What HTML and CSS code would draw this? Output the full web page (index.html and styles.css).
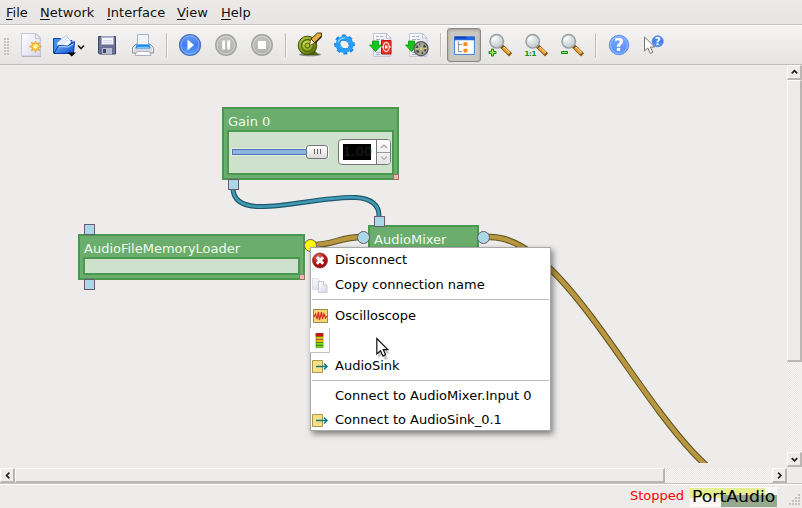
FILE: index.html
```html
<!DOCTYPE html>
<html lang="en">
<head>
<meta charset="utf-8">
<title>Network editor</title>
<link rel="stylesheet" href="styles.css">
</head>
<body>
<svg class="defs" width="0" height="0">
  <defs>
    <linearGradient id="blue" x1="0" y1="0" x2="0" y2="1"><stop offset="0" stop-color="#6f9df2"/><stop offset=".5" stop-color="#3f7df0"/><stop offset="1" stop-color="#5fa0ff"/></linearGradient>
    <linearGradient id="help-blue" x1="0" y1="0" x2="0" y2="1"><stop offset="0" stop-color="#79a6fb"/><stop offset="1" stop-color="#5890f8"/></linearGradient>
    <linearGradient id="grey" x1="0" y1="0" x2="0" y2="1"><stop offset="0" stop-color="#c4c4c2"/><stop offset="1" stop-color="#b0b0ad"/></linearGradient>
    <linearGradient id="paper" x1="0" y1="0" x2="1" y2="1"><stop offset="0" stop-color="#ffffff"/><stop offset="1" stop-color="#d5d7ea"/></linearGradient>
    <linearGradient id="folder" x1="0" y1="0" x2="1" y2="1"><stop offset="0" stop-color="#7fc4ff"/><stop offset="1" stop-color="#0a49c9"/></linearGradient>
    <radialGradient id="lens" cx=".4" cy=".35" r=".7"><stop offset="0" stop-color="#f2f6f7"/><stop offset="1" stop-color="#b9c6ca"/></radialGradient>
    <radialGradient id="snail" cx=".4" cy=".35" r=".7"><stop offset="0" stop-color="#d2df55"/><stop offset=".7" stop-color="#7f9b18"/><stop offset="1" stop-color="#3f5206"/></radialGradient>
    <radialGradient id="red" cx=".4" cy=".3" r=".8"><stop offset="0" stop-color="#e58080"/><stop offset=".5" stop-color="#b81414"/><stop offset="1" stop-color="#8a0808"/></radialGradient>
    <g id="magnifier">
      <path d="M21 20.500L27 26.300" stroke="#8a5418" stroke-width="4.400" stroke-linecap="square"/>
      <path d="M21 20.500L27.300 26.600" stroke="#f0a233" stroke-width="2.800"/>
      <path d="M22 20L28 25.500" stroke="#ffdf9b" stroke-width="1"/>
      <circle cx="14.700" cy="14.300" r="6.800" fill="url(#lens)" stroke="#9a9fa1" stroke-width="1.400"/>
      <path d="M10.500 14.300a4.300 4.300 0 0 1 4.300-4.300" fill="none" stroke="#fff" stroke-width="1.300"/>
    </g>
    <g id="page">
      <path d="M10.500 6.500h13l4.500 4.500v18.500h-17.500z" fill="url(#paper)" stroke="#c3c6d6"/>
      <path d="M13 9.500h3m1 0h3M13 12.500h4m1 0h3M13 25.500h5M13 27.500h4" stroke="#aab0ca"/>
      <path d="M23.500 6.500v4.500h4.500z" fill="#f7f8ff" stroke="#b4b8cc" stroke-width=".8"/>
    </g>
    <path id="down-arrow" d="M9.500 14h6v4h3L12.500 24.500 6.500 18h3z" fill="#15c51b" stroke="#0a980f" stroke-width=".8"/>
    <g id="sink">
      <path d="M1.500 3.500h10v12h-10z" fill="#f5e084" stroke="#a8974c"/>
      <path d="M5 9.500h11M13 6.500l3 3-3 3" fill="none" stroke="#0b7c80" stroke-width="1.500"/>
    </g>
  </defs>
</svg>

<div class="window">
  <nav class="menubar">
    <span class="file"><u>F</u>ile</span><span class="network"><u>N</u>etwork</span><span class="interface"><u>I</u>nterface</span><span class="view"><u>V</u>iew</span><span class="help"><u>H</u>elp</span>
  </nav>

  <div class="toolbar">
    <span class="grip"></span>
    <svg class="tool" viewBox="0 0 36 36">
      <path d="M8.500 6.500h14.500l4.500 4.500v18h-19z" fill="url(#paper)" stroke="#c4c6d8"/>
      <path d="M22.500 6.500v5h5z" fill="#eef0fb" stroke="#b9bcd0" stroke-width=".8"/>
      <path d="M9 29.500h19" stroke="#b0b2bf"/>
      <path d="M22.500 14l1.200 2.800 2.800-1.200-1.200 2.700 3 1.200-3 1.200 1.200 2.800-2.800-1.200-1.200 2.900-1.200-2.900-2.800 1.200 1.200-2.800-3-1.200 3-1.200-1.200-2.700 2.800 1.200z" fill="#ffd95a" stroke="#eb9a18" stroke-width=".9"/>
      <circle cx="22.500" cy="19.500" r="1.800" fill="#fff7c0"/>
    </svg>
    <svg class="tool wide" viewBox="0 0 40 36">
      <path d="M4.500 26V11.500h7l1.500 2h10V26z" fill="#438fe9" stroke="#1244b5"/>
      <path d="M8 16l9-7.500 5 6-3 6-9 2z" fill="#f7fbff" stroke="#9db7de" stroke-width=".8"/>
      <path d="M10 17.500L18 11M11 19l8-6" stroke="#b8cbed" stroke-width=".8"/>
      <path d="M5 26.500l4.500-8 9 .5 7-4.500-1 12z" fill="url(#folder)" stroke="#0a39b0"/>
      <path d="M10 19.500l9 .5 5.500-3" fill="none" stroke="#b4dcff"/>
      <path d="M18.500 25.500h8.500L22.700 29.500z" fill="#000"/>
      <path d="M29 18.500l3 3 3-3" fill="none" stroke="#222" stroke-width="1.700"/>
    </svg>
    <svg class="tool" viewBox="0 0 36 36">
      <path d="M9.500 9.500h17v17.500h-16l-1-1z" fill="#6c7196" stroke="#3e4468"/>
      <path d="M12.500 9.500h12v8h-12z" fill="#f5f6fb" stroke="#a6a9be" stroke-width=".7"/>
      <path d="M12.500 10.500h12" stroke="#aeb3cc"/><path d="M14 13.500h9M14 15.500h9" stroke="#d5d8e8"/>
      <path d="M13 21h10v6H13z" fill="#b8bbcd"/><path d="M14 22h3v4h-3z" fill="#3e4468"/>
    </svg>
    <svg class="tool" viewBox="0 0 36 36">
      <path d="M11 17l-3.500 3.500v5.500h3l1.500 2.500h12l1.500-2.500h3v-5.500L25 17z" fill="#d8d9e1" stroke="#8d909f"/>
      <path d="M12.500 18V7.500h11V18z" fill="#eef3fc" stroke="#a9b3c9"/>
      <path d="M11.500 17.500h13l1 4h-15z" fill="#2588e8"/><path d="M12 20.500h12" stroke="#75c8ff" stroke-width="1.500"/>
      <path d="M12 24.500h12l2 4H10z" fill="#fbfbfd" stroke="#a4a6b1" stroke-width=".8"/>
      <path d="M8.500 21.500v3M27.500 21.500v3" stroke="#fff"/>
    </svg>
    <i class="separator"></i>
    <svg class="tool" viewBox="0 0 36 36"><circle cx="18" cy="18" r="10.500" fill="url(#blue)" stroke="#4b71b6" stroke-width="1.200"/><circle cx="18" cy="18" r="9" fill="none" stroke="#8db4ff" stroke-width=".8"/><path d="M15.500 12.500v11L22 18z" fill="#fff"/></svg>
    <svg class="tool" viewBox="0 0 36 36"><circle cx="18" cy="18" r="10.200" fill="url(#grey)" stroke="#a3a3a1" stroke-width="1.500"/><circle cx="18" cy="18" r="8.900" fill="none" stroke="#d2d2d0"/><path d="M14.200 13.500h2.900v9h-2.900zM19.200 13.500h2.900v9h-2.900z" fill="#fff"/></svg>
    <svg class="tool" viewBox="0 0 36 36"><circle cx="18" cy="18" r="10.200" fill="url(#grey)" stroke="#a3a3a1" stroke-width="1.500"/><circle cx="18" cy="18" r="8.900" fill="none" stroke="#d2d2d0"/><path d="M14 14h8v8h-8z" fill="#fff"/></svg>
    <i class="separator"></i>
    <svg class="tool" viewBox="0 0 36 36">
      <ellipse cx="19" cy="27.500" rx="11" ry="1.800" fill="#555" opacity=".65"/>
      <path d="M15 28h13l-5-5z" fill="#52650c"/>
      <circle cx="16.500" cy="18.500" r="9.300" fill="url(#snail)" stroke="#405006"/>
      <circle cx="16.500" cy="18.500" r="6" fill="none" stroke="#52680c" stroke-width="1.400"/>
      <circle cx="16.500" cy="18.500" r="2.500" fill="#a9c036" stroke="#506409"/>
      <path d="M18.500 18.500l1.500-7 4.500 4z" fill="#fff3d4" stroke="#403010" stroke-width=".6"/>
      <path d="M20 12l6.500-6h4v3.500l-6.500 6.500z" fill="#e0af3c" stroke="#3c2908" stroke-width=".9"/>
      <path d="M24 16l6.500-6.500" stroke="#211704" stroke-width="1.500"/>
    </svg>
    <svg class="tool" viewBox="0 0 36 36">
      <ellipse cx="17.500" cy="17.500" rx="8.800" ry="8" fill="none" stroke="#1684e9" stroke-width="3.500" stroke-dasharray="3.600 3" transform="rotate(28 17.500 17.500)"/>
      <ellipse cx="17.500" cy="17.500" rx="6.900" ry="6.200" fill="none" stroke="#26a0fb" stroke-width="4.400"/>
      <path d="M11 15.500a7 6.500 0 0 1 7-4.500" fill="none" stroke="#79caff" stroke-width="1.500"/>
      <ellipse cx="17.500" cy="17.500" rx="5" ry="4" fill="#f0f1f3" stroke="#167cdc" stroke-width=".9" transform="rotate(35 17.500 17.500)"/>
    </svg>
    <svg class="tool" viewBox="0 0 36 36"><use href="#page"/><path d="M18.500 13.500h9.500v13.500h-9.500z" fill="#e93127" stroke="#b91713"/><ellipse cx="23.300" cy="20" rx="3" ry="4.500" fill="none" stroke="#ffd5d0" stroke-width="1.300"/><path d="M22 18.500h2.500v3H22z" fill="#fff"/><path d="M18.500 20h2m5.500 0h2" stroke="#fff"/><use href="#down-arrow"/></svg>
    <svg class="tool" viewBox="0 0 36 36"><use href="#page"/><use href="#down-arrow"/><circle cx="22" cy="21.700" r="7" fill="#a5a69a" stroke="#5b5c58" stroke-width="1.300"/><circle cx="22" cy="21.700" r="4.300" fill="none" stroke="#4b4c48" stroke-width="2.300" stroke-dasharray="2.500 2"/><circle cx="22" cy="21.700" r="1.500" fill="#e0cc54"/><path d="M22 16v3M22 24.500v3M16.500 21.700h3M24.500 21.700h3" stroke="#d4d0a0"/></svg>
    <i class="separator"></i>
    <svg class="tool pressed" viewBox="0 0 34 34">
      <path d="M7 8.500h21v18.500H7z" fill="#fdfeff" stroke="#3475da"/><path d="M6.500 8h22v4h-22z" fill="#2268de"/><path d="M7.500 9h12" stroke="#0838b4" stroke-width="1.500"/>
      <path d="M11 13v11.500M11 16.500h4M11 24h4" stroke="#888" fill="none"/><path d="M16.500 14h4v4h-4zM16.500 21h4v4h-4z" fill="#fb8b14"/>
    </svg>
    <svg class="tool" viewBox="0 0 36 36"><use href="#magnifier"/><path d="M9.500 22h2v2.500h2.500v2h-2.500v2.500h-2v-2.500H7v-2h2.500z" fill="#a4ed6b" stroke="#168b0c"/></svg>
    <svg class="tool" viewBox="0 0 36 36"><use href="#magnifier"/><text class="ratio" x="6.500" y="29">1:1</text></svg>
    <svg class="tool" viewBox="0 0 36 36"><use href="#magnifier"/><path d="M7.500 24.500h6v2h-6z" fill="#a4ed6b" stroke="#168b0c"/></svg>
    <i class="separator"></i>
    <svg class="tool" viewBox="0 0 36 36"><circle cx="18" cy="18" r="9.700" fill="url(#help-blue)" stroke="#5c8cf0"/><circle cx="18" cy="18" r="8.500" fill="none" stroke="#a6c4ff" stroke-width=".8"/><text class="question" x="18" y="24">?</text></svg>
    <svg class="tool" viewBox="0 0 36 36"><path d="M7.500 10v14l3.300-3 2.500 5.500 2.500-1.200-2.400-5.300h4.300z" fill="#fff" stroke="#777"/><circle cx="20.700" cy="14.300" r="5.500" fill="url(#blue)" stroke="#386fe0" stroke-width=".7"/><text class="question small" x="20.700" y="18">?</text></svg>
  </div>

  <main class="workspace">
    <section class="canvas">
      <svg class="wires" viewBox="0 65 787 398">
        <g fill="none">
          <path d="M233 188C233 238 379 166 379 216" stroke="#23566a" stroke-width="5"/><path d="M233 188C233 238 379 166 379 216" stroke="#3f9bb5" stroke-width="2.600"/>
          <path d="M310 245C337 245 337 237 363 237M484 237H490C582 237 670 493 762 493" stroke="#62531f" stroke-width="6.400"/>
          <path d="M310 245C337 245 337 237 363 237M484 237H490C582 237 670 493 762 493" stroke="#b99740" stroke-width="4.400"/>
        </g>
      </svg>
      <article class="node gain">
        <h2>Gain 0</h2>
        <div class="node-body">
          <div class="slider"><i class="rail"></i><b class="knob"><i></i><i></i><i></i></b></div>
          <div class="spin"><span class="value"><span>1.00</span></span><span class="steps"><svg viewBox="0 0 14 12"><path d="M4 8l3-3 3 3"/></svg><svg viewBox="0 0 14 12"><path d="M4 4l3 3 3-3"/></svg></span></div>
        </div>
        <i class="resize"></i><i class="port bottom"></i>
      </article>
      <article class="node loader">
        <h2>AudioFileMemoryLoader</h2><div class="node-body"></div>
        <i class="resize"></i><i class="port top"></i><i class="port bottom"></i><i class="port round right yellow"></i>
      </article>
      <article class="node mixer">
        <h2>AudioMixer</h2>
        <i class="port top"></i><i class="port round left"></i><i class="port round right"></i>
      </article>
      <div class="context-menu">
        <div class="item first"><svg viewBox="0 0 18 18"><circle cx="9" cy="9.500" r="7.500" fill="url(#red)" stroke="#9a3434" stroke-width=".8"/><path d="M5.800 6.300l6.400 6.400M12.200 6.300l-6.400 6.400" stroke="#fff" stroke-width="3"/></svg><span>Disconnect</span></div>
        <div class="item"><svg viewBox="0 0 18 18"><path d="M1.500 2.500h5l3 3v8h-8z" fill="url(#paper)" stroke="#dcdce2"/><path d="M7.500 5.500h5l3.500 3.500v7.500H7.500z" fill="url(#paper)" stroke="#cbccd5"/><path d="M12.500 5.500V9H16" fill="#fff" stroke="#c5c5d0"/></svg><span>Copy connection name</span></div>
        <hr>
        <div class="item"><svg viewBox="0 0 18 18"><path d="M2.500 2.500h14v13h-14z" fill="#f3d878" stroke="#a38b45"/><path d="M3 10l1.500-3 1.500 5 1.500-7 1 8 2-8 1 7 1.500-5 1.500 4 1.500-2" fill="none" stroke="#d92c20" stroke-width="1.200"/></svg><span>Oscilloscope</span></div>
        <div class="item meter"><svg viewBox="0 0 18 18"><path d="M5 1h8v16H5z" fill="#525238"/><path d="M5 1.500h8V4H5z" fill="#e40909"/><path d="M5.500 5H13v2.300H5.500zM5.500 8.300H13v2.200H5.500z" fill="#f0b80a"/><path d="M5.500 11.300H13v2.300H5.500zM5.500 14.500H13v2.300H5.500z" fill="#6bea00"/></svg></div>
        <div class="item"><svg viewBox="0 0 18 18"><use href="#sink"/></svg><span>AudioSink</span></div>
        <hr class="second">
        <div class="item connect"><i class="blank"></i><span>Connect to AudioMixer.Input 0</span></div>
        <div class="item last"><svg viewBox="0 0 18 18"><use href="#sink"/></svg><span>Connect to AudioSink_0.1</span></div>
      </div>
      <svg class="cursor" viewBox="0 0 15 23"><path d="M2 4v17l4-3.500L9 23l3-1-2.500-5.500H14z" fill="#777" opacity=".4"/><path d="M.8 1.500v15.500l3.700-3.300 2.400 5.300 2.700-1.200-2.300-5.100h4.500z" fill="#fff" stroke="#111" stroke-width="1.200"/></svg>
    </section>
    <div class="scroll vertical"><span class="button"><svg viewBox="0 0 14 14"><path d="M4 8l3-3 3 3"/></svg></span><i class="thumb"></i><span class="track"></span><span class="button"><svg viewBox="0 0 14 14"><path d="M4 5.500l3 3 3-3"/></svg></span></div>
  </main>
  <div class="scroll horizontal"><span class="button"><svg viewBox="0 0 14 14"><path d="M9 4L6 7l3 3"/></svg></span><i class="thumb"></i><span class="track"></span><span class="button"><svg viewBox="0 0 14 14"><path d="M5.500 4l3 3-3 3"/></svg></span></div>
  <footer class="statusbar"><span class="state">Stopped</span><span class="backend"><span>PortAudio</span></span><svg class="size-grip" viewBox="0 0 12 12"><path d="M10 1h2M7 4h2M10 4h2M4 7h2M7 7h2M10 7h2M1 10h2M4 10h2M7 10h2M10 10h2" stroke="#b5b4b2" stroke-width="1.500"/></svg></footer>
</div>
</body>
</html>
```
FILE: styles.css
```css
* { box-sizing: border-box; }
body { margin: 0; font: 13px/16px "DejaVu Sans", sans-serif; color: #111; background: #edecea; overflow: hidden; }
.defs { position: absolute; }
.window { width: 802px; height: 508px; display: flex; flex-direction: column; }

.menubar { height: 25px; padding: 5px 0 0 6px; display: flex; background: linear-gradient(#ebeae9, #e6e5e3); border-bottom: 1px solid #c2c1bf; }
.menubar u { text-underline-offset: 2px; text-decoration-thickness: 1px; }
.menubar .file { width: 34px; }
.menubar .network { width: 67px; }
.menubar .interface { width: 70px; }
.menubar .view { width: 44px; }

.toolbar { height: 40px; padding-top: 1px; display: flex; background: linear-gradient(#f5f4f3, #e5e4e2); border-top: 1px solid #fff; border-bottom: 1px solid #bebdbb; }
.grip { width: 5px; height: 17px; margin: 11px 4px 0; background: radial-gradient(circle at 1px 1px, #c4c3c1 .7px, transparent 1px) 0 0 / 3px 3px; }
.tool { width: 36px; height: 36px; flex: none; }
.tool.wide { width: 40px; }
.separator { width: 1px; height: 24px; margin: 6px 5px 0; flex: none; background: #bcbbb9; box-shadow: 1px 0 #fafafa; }
.tool.pressed { width: 34px; height: 34px; margin: 1px; border: 1px solid #8a8784; border-radius: 3px; background: #cbc7c3; box-shadow: inset 0 1px 3px #9d9995; }
.ratio { font: bold 7px "DejaVu Sans", sans-serif; fill: #138c0a; letter-spacing: -.3px; }
.question { font: bold 17px "DejaVu Sans", sans-serif; fill: #fff; text-anchor: middle; }
.question.small { font-size: 10px; }

.workspace { height: 402px; display: flex; }
.canvas { position: relative; width: 787px; height: 402px; overflow: hidden; }
.wires { display: block; width: 787px; height: 398px; }
.node { position: absolute; background: #6aad6c; border: 2px solid #4a984d; }
.node h2 { margin: 0; font: 13px/16px "DejaVu Sans", sans-serif; color: #f0faef; }
.gain { left: 222px; top: 42px; width: 177px; height: 73px; padding: 5px 3px 3px 3px; }
.loader { left: 78px; top: 169px; width: 227px; height: 46px; padding: 5px 3px 3px 3px; }
.mixer { left: 368px; top: 160px; width: 111px; height: 60px; padding: 5px 4px; }
.gain h2, .loader h2 { padding-left: 1px; }
.node-body { border: 2px solid #4a984d; background: #cde1cd; }
.gain .node-body { display: flex; width: 167px; height: 45px; padding: 6px 0 0 3px; }
.loader .node-body { width: 217px; height: 18px; }
.slider { display: flex; align-items: center; width: 97px; height: 27px; }
.rail { width: 75px; height: 6px; margin-right: -1px; background: #8eb1df; border: 1px solid #5078b4; box-shadow: 0 0 0 1px #e1ece2; }
.knob { width: 22px; height: 14px; display: flex; justify-content: center; align-items: center; gap: 2px; background: linear-gradient(#fff, #dcdcdc); border: 1px solid #777; border-radius: 3px; box-shadow: 1px 0 #f5f5f5; }
.knob i { width: 1px; height: 5px; background: #666; }
.spin { display: flex; width: 53px; height: 26px; margin: 1px 0 0 9px; overflow: hidden; background: #fff; border: 1px solid #777; border-radius: 4px; }
.value { width: 38px; padding: 4px 0 0 4px; }
.value span { display: block; width: 28px; height: 16px; background: #000; color: #202020; line-height: 16px; }
.steps { width: 14px; display: flex; flex-direction: column; background: linear-gradient(#fff, #e5e5e5); border-left: 1px solid #777; }
.steps svg { width: 14px; height: 12px; fill: none; stroke: #a3a3a3; stroke-width: 1.2; }
.steps svg + svg { border-top: 1px solid #999; }
.resize { position: absolute; right: -2px; bottom: -2px; width: 6px; height: 6px; background: #f6b4ae; border: 1px solid #9a7464; }
.port { position: absolute; width: 11px; height: 11px; background: #abd8e6; border: 1px solid #6a5a70; }
.port.top { left: 3.5px; top: -12px; }
.port.bottom { left: 3.5px; bottom: -12px; }
.mixer .port.top { left: 3.5px; top: -11px; }
.port.round { width: 13px; height: 13px; border-radius: 50%; }
.port.left { left: -13px; top: 4px; }
.port.right { right: -13px; top: 4px; }
.port.yellow { background: #ff0; top: 3px; right: -14px; }

.context-menu { position: absolute; left: 310px; top: 182px; width: 241px; height: 184px; background: #fff; border: 1px solid #a9a8a8; box-shadow: 2px 3px 6px rgba(0,0,0,.48); color: #000; }
.item { height: 25px; display: flex; align-items: center; }
.item svg, .blank { width: 18px; height: 18px; margin-right: 6px; }
.item.first { height: 24px; }
.item.connect { height: 24px; padding-top: 2px; }
.item.last { height: 23px; padding-top: 2px; }
.context-menu hr { height: 1px; margin: 2px 1px 3px; border: 0; background: #bcbbbb; }
.context-menu hr.second { margin: 2px 1px 2px; }
.meter { width: 20px; margin-left: -1px; padding-left: 1px; background: #fff; border: solid #c2c2c2; border-width: 0 1px 1px 0; }
.item.meter svg { width: 17px; height: 17px; margin: 0; }
.cursor { position: absolute; left: 376px; top: 272px; width: 15px; height: 23px; }

.scroll { display: flex; background: #edecea; }
.vertical { width: 15px; height: 402px; flex-direction: column; }
.horizontal { width: 787px; height: 16px; padding-top: 1px; }
.button, .thumb { flex: none; background: #edecea; border: 1px solid #fff; border-right: 2px solid #b8b7b5; border-bottom: 2px solid #b8b7b5; }
.button { width: 15px; height: 15px; }
.button svg { display: block; width: 13px; height: 13px; fill: none; stroke: #222; stroke-width: 1.8; }
.vertical .thumb { width: 15px; height: 282px; }
.horizontal .thumb { width: 650px; height: 15px; }
.track { flex: 1; background: repeating-conic-gradient(#f8f8f8 0 25%, #e8e7e5 0 50%) 0 0 / 2px 2px; }

.statusbar { display: flex; flex: 1; border-top: 1px solid #c5c4c2; box-shadow: inset 0 1px #fff; }
.state { width: 60px; margin-left: 630px; padding-top: 4px; color: #f00; }
.backend { width: 87px; height: 20px; margin-top: 3px; padding-left: 2px; color: #000; font-size: 15px; line-height: 20px; background: linear-gradient(#94aa8e, #94aa8e) 31px 8px / 56px 12px no-repeat, linear-gradient(#e3ee91, #e3ee91) 0 1px / 75px 10px no-repeat, #f9f9f6; }
.backend span { display: inline-block; transform: scaleX(1.15); transform-origin: left; }
.size-grip { width: 12px; height: 12px; margin: 10px 0 0 11px; }
```
